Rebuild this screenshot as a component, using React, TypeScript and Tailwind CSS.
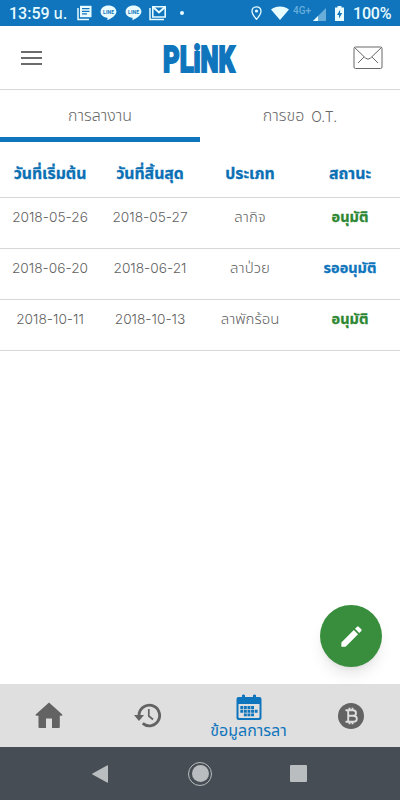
import { MdModeEdit } from "react-icons/md";

interface LeaveRequest {
  start: string;
  end: string;
  type: string;
  status: string;
  approved: boolean;
}

const columns = ["วันที่เริ่มต้น", "วันที่สิ้นสุด", "ประเภท", "สถานะ"];

const requests: LeaveRequest[] = [
  { start: "2018-05-26", end: "2018-05-27", type: "ลากิจ", status: "อนุมัติ", approved: true },
  { start: "2018-06-20", end: "2018-06-21", type: "ลาป่วย", status: "รออนุมัติ", approved: false },
  { start: "2018-10-11", end: "2018-10-13", type: "ลาพักร้อน", status: "อนุมัติ", approved: true },
];

function LineIcon() {
  return (
    <svg width="17" height="16" viewBox="0 0 17 16">
      <path d="M8.500.5C4 .5.6 3.200.6 6.700c0 3.200 2.700 5.500 6.500 6.100.8.200.4 1.300.3 2.400 3.800-1.800 9-4.900 9-8.500C16.400 3.200 13 .5 8.500.5Z" fill="#e8fbff" />
      <text x="8.500" y="8.600" textAnchor="middle" textLength="11" fontSize="5" fontWeight="700" fontFamily="Roboto" fill="#0f75bc">
        LINE
      </text>
    </svg>
  );
}

function StatusBar() {
  return (
    <div className="flex h-[26px] shrink-0 items-center bg-[#1075bd] text-[#e8fbff]">
      <span className="ml-[9px] mt-0.5 w-[68px] whitespace-nowrap text-base font-medium leading-none">
        13:59 <span className="text-[15px]">น.</span>
      </span>
      <svg width="15" height="16" viewBox="0 0 15 16" fill="none" stroke="currentColor">
        <path d="M1 3v11.500h11" strokeWidth="1.500" />
        <path d="M3 .8h11.500v11.400H3Z" fill="currentColor" stroke="none" />
        <path d="M5 3.700h7.500M5 6.300h7.500M5 8.900h5" stroke="#1075bd" strokeWidth="1.300" />
      </svg>
      <div className="ml-2 flex gap-2">
        <LineIcon />
        <LineIcon />
      </div>
      <svg className="ml-[7px]" width="18" height="16" viewBox="0 0 18 16" fill="none" stroke="currentColor">
        <path d="M1 3v11.500h14" strokeWidth="1.500" />
        <path d="M3.800 12V1.800h12.400V12Z" strokeWidth="1.600" />
        <path d="M4 2l6 5.500L16 2" strokeWidth="2" />
      </svg>
      <span className="ml-[13px] size-1 rounded-full bg-current" />
      <svg className="ml-[67px]" width="11" height="14" viewBox="0 0 11 14" fill="none" stroke="currentColor">
        <path d="M5.500.8C2.800.8 1 2.700 1 5.200c0 3 4.500 8 4.500 8s4.500-5 4.500-8C10 2.700 8.200.8 5.500.8Z" strokeWidth="1.300" />
        <circle cx="5.500" cy="5" r="1.600" fill="currentColor" stroke="none" />
      </svg>
      <svg className="ml-[9px]" width="18" height="14" viewBox="0 0 18 14" fill="currentColor">
        <path d="M0 3.500C5-.5 13-.5 18 3.500L9 14Z" />
      </svg>
      <span className="mb-[4px] ml-1 w-[19px] text-[10px] font-medium leading-none text-[#68aedb]">4G+</span>
      <svg className="ml-px mt-0.5" width="13" height="13" viewBox="0 0 13 13">
        <path d="M13 0v13H0Z" fill="#69add9" />
        <path d="M5 8v5H0Z" fill="currentColor" />
      </svg>
      <svg className="ml-[9px]" width="9" height="15" viewBox="0 0 9 15">
        <path d="M2.500 0h4v1.500H9V15H0V1.500h2.500Z" fill="currentColor" />
        <path d="M5.200 3.500 2 9h2v3.500L7.200 7H5Z" fill="#1075bd" />
      </svg>
      <span className="ml-[9px] mt-0.5 text-base font-medium leading-none tracking-[-0.2px]">100%</span>
    </div>
  );
}

function Header() {
  return (
    <header className="flex h-16 shrink-0 items-center border-b border-[#d8d8d8] pl-[21px]">
      <div className="flex w-[21px] flex-col gap-[4px]">
        <span className="h-[2px] bg-[#6b6b6b]" />
        <span className="h-[2px] bg-[#6b6b6b]" />
        <span className="h-[2px] bg-[#6b6b6b]" />
      </div>
      <svg className="ml-[119px]" width="77" height="48" viewBox="0 0 77 48">
        <g transform="translate(2 37.600) scale(1 1.560)">
          <text textLength="72" lengthAdjust="spacingAndGlyphs" fontFamily="Roboto" fontWeight="900" fontSize="24" fill="#0f75bc" stroke="#0f75bc" strokeWidth="1.200">
            PLiNK
          </text>
        </g>
      </svg>
      <svg className="ml-[115px]" width="30" height="24" viewBox="0 0 30 24" fill="none" stroke="#686868">
        <rect x="1" y="1" width="28" height="21.500" rx="1.500" />
        <path d="M1.500 1.500l11 10.500q2.500 2.500 5 0l11-10.500M11 11l-6 6M19 11l6 6" />
      </svg>
    </header>
  );
}

function Tabs() {
  return (
    <div className="grid h-[52px] shrink-0 grid-cols-2 font-['Inter','Noto_Sans_Thai',sans-serif] text-base font-light text-[#666666]">
      <div className="flex items-center justify-center border-b-[5px] border-[#0f75bc] pt-[3px]">การลางาน</div>
      <div className="flex items-center justify-center border-b-[5px] border-transparent pt-[3px]">
        การขอ<span className="ml-[7px] pt-0.5 text-[14px]">O.T.</span>
      </div>
    </div>
  );
}

function LeaveTable() {
  return (
    <div className="font-['Inter','Noto_Sans_Thai',sans-serif]">
      <div className="grid h-14 grid-cols-4 items-center border-b border-[#d8d8d8] pt-2 text-center text-[15.800px] font-bold text-[#0b70b4] [-webkit-text-stroke:0.3px]">
        {columns.map((column) => (
          <span key={column}>{column}</span>
        ))}
      </div>
      {requests.map((request) => (
        <div
          key={request.start}
          className="grid h-[51px] grid-cols-4 border-b border-[#d8d8d8] pt-[9px] text-center text-[15px] font-light leading-5 text-[#5f5f5f]"
        >
          <span className="text-[13.700px]">{request.start}</span>
          <span className="text-[13.700px]">{request.end}</span>
          <span>{request.type}</span>
          <span
            className={`font-bold text-[14.500px] [-webkit-text-stroke:0.3px] ${
              request.approved ? "text-[#2d8733]" : "text-[#0f75bc]"
            }`}
          >
            {request.status}
          </span>
        </div>
      ))}
    </div>
  );
}

function HomeIcon() {
  return (
    <svg width="28" height="27" viewBox="0 0 28 27" fill="currentColor">
      <path d="M14 .5 27.300 12.500q.5 1.200-1 1.200H24.800V25q0 1-1 1H17v-9.500h-6V26H4.500q-1 0-1-1V13.700H1.700q-1.500 0-1-1.200Z" />
    </svg>
  );
}

function HistoryIcon() {
  return (
    <svg width="27" height="25" viewBox="0 0 27 25" fill="none" stroke="currentColor">
      <path d="M5 12.500A10.300 10.300 0 1 1 8.700 20.400" strokeWidth="2.800" />
      <path d="M0 12h10l-5 6Z" fill="currentColor" stroke="none" />
      <path d="M14.800 6v7l4.200 3.500" strokeWidth="1.700" />
    </svg>
  );
}

function CalendarIcon() {
  return (
    <svg width="26" height="27" viewBox="0 0 26 27" fill="#0f75bc">
      <path fillRule="evenodd" d="M2.500 3h3.500V1q1.500-1 3 0v2h8V1q1.500-1 3 0v2h3.500q2 0 2 2v19q0 2-2 2h-21q-2 0-2-2V5q0-2 2-2ZM2.500 10v13q0 1 1 1h19q1 0 1-1V10Z" />
      <g fill="none" stroke="#0f75bc" strokeWidth="2.900" strokeDasharray="2.900 .7">
        <path d="M4.300 13.500h14M4.300 17.200h17.700M7.900 20.900h10.500" />
      </g>
    </svg>
  );
}

function BitcoinIcon() {
  return (
    <svg width="26" height="26" viewBox="0 0 26 26">
      <circle cx="13" cy="13" r="13" fill="#636363" />
      <path d="M7.500 7.200h7.500q3 0 3 2.800T15 12.800h-4.500m4.500 0q3.800 0 3.800 3T15 18.800H7.500M10.200 7.200v11.600M11.500 4.800v2.400M14.500 4.800v2.400M11.500 18.800v2.400M14.500 18.800v2.400" fill="none" stroke="#dfdfdf" strokeWidth="1.900" />
    </svg>
  );
}

function BottomNav() {
  return (
    <nav className="grid h-[63px] shrink-0 grid-cols-4 bg-[#dfdfdf] text-[#636363]">
      <div className="flex items-center justify-center pr-[3px]">
        <HomeIcon />
      </div>
      <div className="flex items-center justify-center pr-[6px]">
        <HistoryIcon />
      </div>
      <div className="flex flex-col items-center pr-[3px] pt-[10px] text-[#0f75bc]">
        <CalendarIcon />
        <span className="text-base leading-5">ข้อมูลการลา</span>
      </div>
      <div className="flex items-center justify-center pl-[2px]">
        <BitcoinIcon />
      </div>
    </nav>
  );
}

function SystemBar() {
  return (
    <div className="flex h-[53px] shrink-0 items-center bg-[#464d54] pl-[92px] text-[#b9bdbf]">
      <svg width="16" height="18" viewBox="0 0 16 18" fill="currentColor">
        <path d="M15 .5q1-.5 1 .5v16q0 1-1 .5L.5 9.500q-1-.5 0-1Z" />
      </svg>
      <div className="ml-20 flex size-6 items-center justify-center rounded-full border border-current">
        <span className="size-[17px] rounded-full bg-current" />
      </div>
      <span className="ml-[78px] size-[17px] rounded-[1px] bg-current" />
    </div>
  );
}

export default function App() {
  return (
    <div className="relative flex h-[800px] w-[400px] flex-col overflow-hidden bg-white font-['Roboto','Noto_Sans_Thai',sans-serif]">
      <StatusBar />
      <Header />
      <Tabs />
      <LeaveTable />
      <div className="flex-1" />
      <button className="absolute bottom-[133px] right-[18px] flex size-[62px] items-center justify-center rounded-full bg-[#388e3c] text-white shadow-lg">
        <MdModeEdit size={27} />
      </button>
      <BottomNav />
      <SystemBar />
    </div>
  );
}
